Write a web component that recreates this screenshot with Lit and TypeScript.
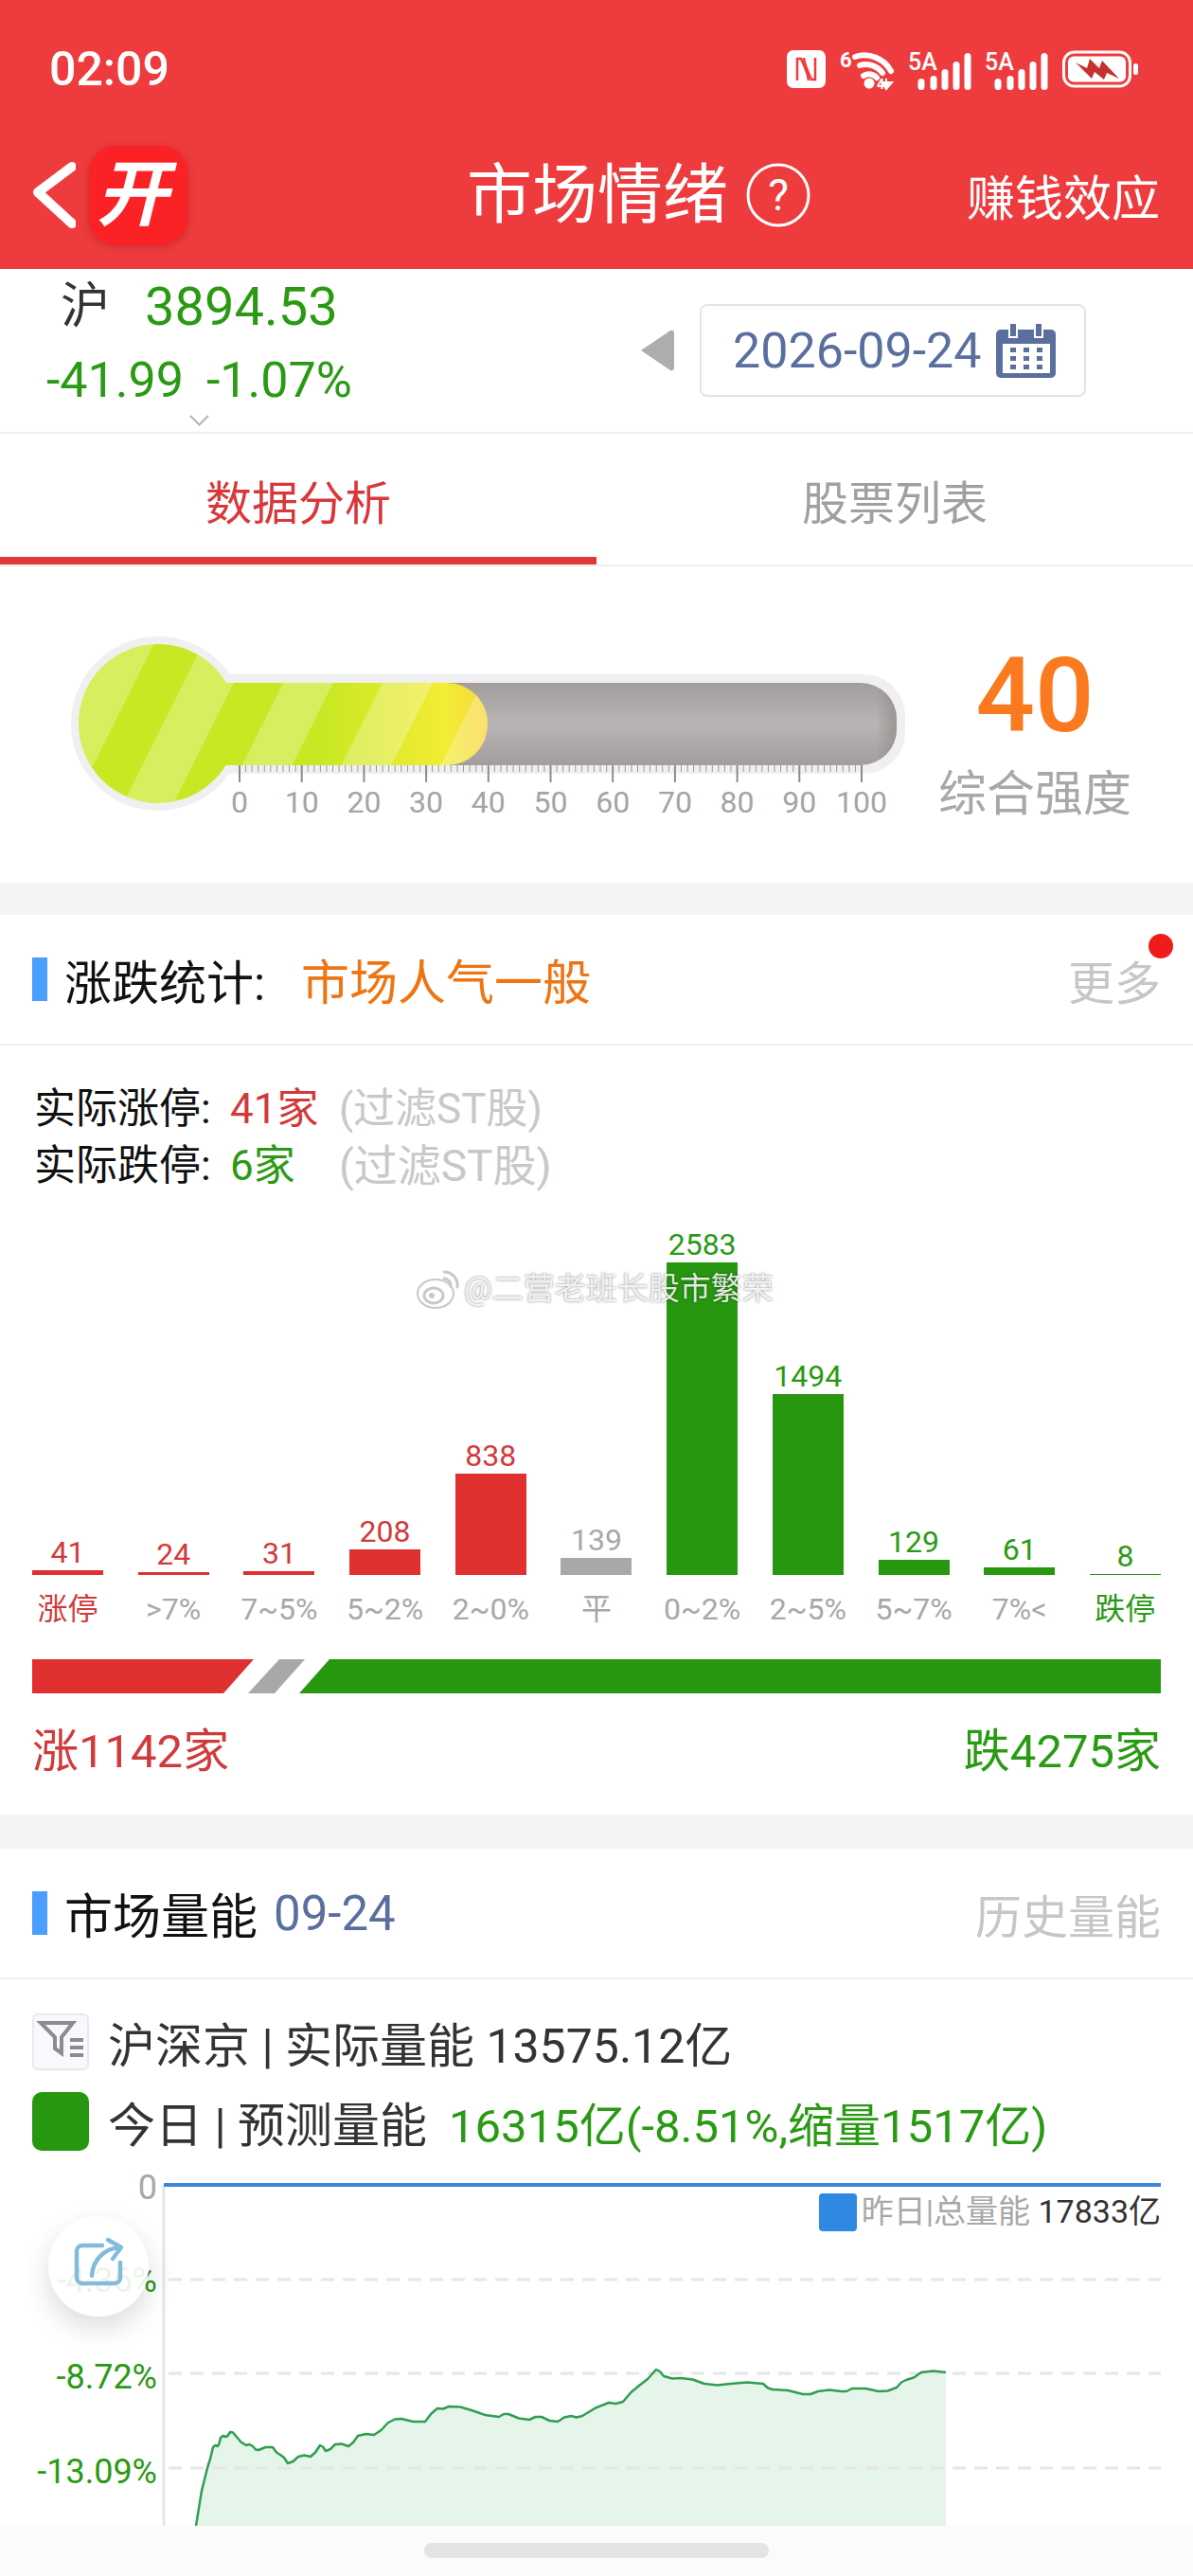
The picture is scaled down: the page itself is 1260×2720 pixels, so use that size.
import { LitElement, css, html, svg } from 'lit';
import { customElement } from 'lit/decorators.js';

const BARS = [
  { v: 41, l: '涨停', c: 'red', lc: 'red' },
  { v: 24, l: '>7%', c: 'red', lc: 'gray' },
  { v: 31, l: '7~5%', c: 'red', lc: 'gray' },
  { v: 208, l: '5~2%', c: 'red', lc: 'gray' },
  { v: 838, l: '2~0%', c: 'red', lc: 'gray' },
  { v: 139, l: '平', c: 'gray', lc: 'gray' },
  { v: 2583, l: '0~2%', c: 'green', lc: 'gray' },
  { v: 1494, l: '2~5%', c: 'green', lc: 'gray' },
  { v: 129, l: '5~7%', c: 'green', lc: 'gray' },
  { v: 61, l: '7%<', c: 'green', lc: 'gray' },
  { v: 8, l: '跌停', c: 'green', lc: 'green' },
];

// traced from the chart, in page pixels
const LINE = [
  [207, 2667], [213, 2630], [219, 2606], [225, 2584], [230, 2583], [233, 2574], [238, 2573], [243, 2568],
  [249, 2572], [260, 2582], [267, 2583], [273, 2587], [288, 2584], [296, 2592], [304, 2601], [315, 2594],
  [328, 2594], [338, 2582], [344, 2588], [354, 2581], [368, 2583], [378, 2572], [395, 2571], [410, 2558],
  [424, 2554], [449, 2557], [462, 2543], [474, 2541], [498, 2545], [527, 2552], [537, 2549], [559, 2555],
  [572, 2552], [589, 2557], [603, 2551], [615, 2551], [643, 2537], [658, 2536], [675, 2519], [693, 2502],
  [701, 2509], [719, 2511], [744, 2517], [772, 2517], [806, 2517], [816, 2523], [848, 2528], [864, 2525],
  [888, 2525], [900, 2522], [928, 2525], [947, 2521], [957, 2513], [973, 2505], [999, 2505],
];

const LIGHT_BANDS = [89, 194, 299, 404, 509];

@customElement('app-root')
export class AppRoot extends LitElement {
  static styles = css`
    :host {
      display: block;
      position: relative;
      width: 1260px;
      height: 2720px;
      overflow: hidden;
      background: #fff;
      color: #222;
      font-family: Roboto, 'Noto Sans CJK SC', sans-serif;
    }
    svg { display: block; flex: none; }

    .top { height: 284px; background: #ee3b3e; color: #fff; }
    .status { height: 146px; display: flex; align-items: center; padding: 0 56px 0 52px; box-sizing: border-box; }
    .time { font-size: 50px; font-weight: 500; flex: 1; }
    .status-icons { display: flex; gap: 15px; align-items: center; }
    .nav { height: 138px; padding: 0 35px 18px 34px; box-sizing: border-box; display: flex; align-items: center; }
    .logo {
      width: 104px; height: 104px; margin-left: 14px; border-radius: 28px;
      background: #fb2226; box-shadow: 0 2px 8px rgba(120, 0, 0, .3);
      display: flex; align-items: center; justify-content: center;
    }
    .logo span { font-size: 76px; font-weight: 700; transform: skewX(-14deg); line-height: 1; }
    .title { margin-left: 295px; font-size: 69px; line-height: 1; }
    .help { margin-left: 19px; }
    .right-link { margin-left: auto; font-size: 51px; }

    .index { height: 174px; border-bottom: 2px solid #eee; box-sizing: border-box; display: flex; align-items: center; }
    .quote { flex: 1; align-self: stretch; display: flex; flex-direction: column; color: #2a9a14; }
    .quote-main { height: 80px; display: flex; align-items: center; padding-left: 64px; font-size: 56px; }
    .quote-main b { font-weight: 400; font-size: 52px; color: #333; width: 89px; margin-top: -12px; }
    .quote-sub { height: 74px; display: flex; align-items: center; gap: 24px; padding-left: 49px; font-size: 52px; }
    .quote-more { padding-left: 200px; }
    .date-box {
      width: 408px; height: 98px; margin: 0 113px 0 27px; box-sizing: border-box;
      border: 2px solid #e4e4e4; border-radius: 8px;
      display: flex; align-items: center; gap: 15px; padding-left: 33px;
      font-size: 52px; color: #5a6f9e;
    }

    .tabs { height: 140px; display: flex; box-sizing: border-box; border-bottom: 2px solid #eee; }
    .tab { flex: 1; display: flex; align-items: center; justify-content: center; font-size: 49px; color: #a0a0a0; }
    .tab.on { color: #d9383a; box-shadow: inset 0 -8px 0 #e0393b; }

    .thermo { height: 334px; display: flex; }
    .score { flex: 1; padding: 83px 44px 0 0; display: flex; flex-direction: column; align-items: center; }
    .score b { font-size: 110px; line-height: 108px; font-weight: 500; color: #fb7a1f; }
    .score span { font-size: 51px; line-height: 60px; margin-top: 20px; color: #a8a8a8; }

    .gap { height: 36px; background: #f4f4f4; }
    .gap.first { height: 34px; }

    .sec-head {
      position: relative; height: 138px; box-sizing: border-box; border-bottom: 2px solid #eee;
      display: flex; align-items: center; padding: 0 34px; font-size: 50px; color: #111;
    }
    .sec-head::before { content: ''; width: 16px; height: 46px; background: #4a9eff; margin-right: 18px; }
    .mood { color: #ee7514; margin-left: 38px; font-size: 51px; }
    .sec-date { color: #5a6f9e; margin-left: 17px; font-size: 51px; }
    .sec-title { font-size: 51px; }
    .sec-link { margin-left: auto; color: #c6c6c6; font-size: 49px; }
    .dot { position: absolute; left: 1213px; top: 20px; width: 26px; height: 26px; border-radius: 50%; background: #f01c1c; }

    .limits { padding: 37px 0 0 36px; font-size: 44px; line-height: 60px; height: 157px; box-sizing: border-box; color: #111; }
    .limit-row { display: flex; align-items: center; }
    .limit-row .key { width: 207px; }
    .limit-row .num { width: 115px; }
    .limit-row .note { color: #c8c8c8; }
    .limit-row .note.wide { font-size: 46px; }
    .red { color: #d13a3a; }
    .green { color: #2a9a14; }
    .gray { color: #a8a8a8; }

    .bars { height: 402px; padding: 0 34px; display: flex; justify-content: space-between; align-items: flex-end; }
    .col { width: 75px; display: flex; flex-direction: column; align-items: center; }
    .col .val { font-size: 32px; line-height: 32px; margin-bottom: 3px; }
    .bar { width: 75px; }
    .bar.red { background: #e03030; }
    .bar.green { background: #26970f; }
    .bar.gray { background: #a8a8a8; }
    .axis { padding: 16px 34px 0; display: flex; justify-content: space-between; font-size: 32px; line-height: 40px; }
    .axis span { width: 75px; display: flex; justify-content: center; white-space: nowrap; }
    .ratio { margin: 33px 0 0 34px; }
    .totals { margin-top: 32px; padding: 0 34px 36px; display: flex; justify-content: space-between; font-size: 49px; line-height: 60px; }

    .energy { padding: 36px 34px 0; font-size: 50px; color: #333; }
    .energy-row { height: 60px; display: flex; align-items: center; gap: 20px; }
    .energy-row + .energy-row { margin-top: 23px; height: 62px; }
    .filter { width: 60px; height: 60px; box-sizing: border-box; border: 2px solid #e8e8ee; border-radius: 6px; background: #f9f9fd; }
    .swatch { width: 60px; height: 62px; border-radius: 10px; background: #26970f; }
    .energy-row .green { margin-left: 3px; font-size: 49px; }

    .chart text { font-size: 36px; }
    .chart .legend { font-size: 34px; }

    .home { position: absolute; left: 0; right: 0; top: 2667px; height: 53px; background: #fbfbfb; display: flex; justify-content: center; align-items: flex-start; }
    .home i { display: block; width: 364px; height: 16px; margin-top: 18px; border-radius: 8px; background: #e4e4e4; }

    .share {
      position: absolute; left: 51px; top: 2340px; width: 106px; height: 106px; border-radius: 50%;
      background: rgba(255, 255, 255, .9); box-shadow: 0 12px 30px rgba(0, 0, 0, .14);
    }
    .mark {
      position: absolute; left: 440px; top: 1336px; display: flex; align-items: center; gap: 4px;
      font-size: 33px; line-height: 50px; color: rgba(255, 255, 255, .88);
      text-shadow: 0 0 3px rgba(0, 0, 0, .4), 0 0 1px rgba(0, 0, 0, .2);
    }
  `;

  private statusIcons() {
    const signal = html`<svg width="66" height="50" viewBox="0 -8 66 50" fill="#fff">
      <text x="-1" y="18" font-size="25" font-weight="500">5A</text>
      ${[[13, 12], [26, 15], [38, 22], [50, 30], [62, 39]].map(([x, h]) =>
        svg`<rect x=${x - 3.5} y=${39 - h} width="7" height=${h} rx="3.5"></rect>`)}
    </svg>`;
    return html`<div class="status-icons">
      <svg width="41" height="40" viewBox="0 0 41 40" fill="none" stroke="#ee3b3e" stroke-width="2.500">
        <rect width="41" height="40" rx="7" fill="#fff" stroke="none"></rect>
        <path d="M11 32V9h4c3 7 7 14 8 23"></path>
        <path d="M30 8v23h-4c-3-7-7-14-8-23"></path>
      </svg>
      <svg width="58" height="56" viewBox="0 -8 58 56" fill="none" stroke="#fff" stroke-width="6">
        <text x="0" y="18" font-size="22" font-weight="700" fill="#fff" stroke="none">6</text>
        <path d="M16 7a32 32 0 0 1 38 15M21 16a22 22 0 0 1 24 8M25 27a11 11 0 0 1 14 2" stroke-linecap="round"></path>
        <circle cx="31" cy="35" r="5.500" fill="#fff" stroke="none"></circle>
        <text x="39" y="41" font-size="14" font-weight="700" fill="#fff" stroke="none">4</text>
        <path d="M49 30v9M49 41l6-7h-10z" stroke-width="2" fill="#fff"></path>
      </svg>
      ${signal}${signal}
      <svg width="82" height="40" viewBox="0 0 82 40">
        <rect x="1.500" y="2" width="70" height="36" rx="11" fill="none" stroke="#fff" stroke-width="3"></rect>
        <rect x="6" y="6.500" width="61" height="27" rx="6" fill="#fff"></rect>
        <path d="M14 13l12 6 3-10 10 10 3-8 18 19-13-6-3 7-10-8-3 7z" fill="#c8302f"></path>
        <rect x="75" y="14" width="5" height="12" rx="2.500" fill="#fff"></rect>
      </svg>
    </div>`;
  }

  private calendar() {
    return html`<svg width="63" height="58" viewBox="0 0 63 58" fill="#5a6f9e">
      <rect y="7" width="63" height="51" rx="5"></rect>
      <rect x="7" y="22" width="50" height="31" fill="#fff"></rect>
      <rect x="14" y="0" width="8" height="15" fill="#5a6f9e" stroke="#fff" stroke-width="2"></rect>
      <rect x="41" y="0" width="8" height="15" fill="#5a6f9e" stroke="#fff" stroke-width="2"></rect>
      ${[15, 29, 43].map(x => [26, 35, 44].map(y => svg`<rect x=${x} y=${y} width="6" height="5"></rect>`))}
    </svg>`;
  }

  private thermometer() {
    const ticks = [];
    for (let i = 0; i <= 100; i++) {
      const x = 253 + i * 6.57;
      const major = i % 10 === 0;
      ticks.push(svg`<line x1=${x} x2=${x} y1="212" y2=${major ? 230 : 219} stroke=${major ? '#8c8c8c' : '#9a9a9a'} stroke-width=${major ? 2 : 1}></line>`);
      if (major) ticks.push(svg`<text x=${x} y="262" text-anchor="middle" font-size="32" fill="#a4a4a4">${i}</text>`);
    }
    // viewBox y is page y minus 596
    return html`<svg width="970" height="334" viewBox="0 2 970 334">
      <defs>
        <linearGradient id="tube" x1="0" y1="0" x2="0" y2="1">
          <stop offset="0" stop-color="#a39d9d"></stop>
          <stop offset=".5" stop-color="#b9b5b4"></stop>
          <stop offset="1" stop-color="#a39d9d"></stop>
        </linearGradient>
        <linearGradient id="tube-end" gradientUnits="userSpaceOnUse" x1="925" y1="0" x2="947" y2="0">
          <stop offset="0" stop-color="#8f8888" stop-opacity="0"></stop>
          <stop offset="1" stop-color="#8f8888" stop-opacity=".7"></stop>
        </linearGradient>
        <linearGradient id="fill" gradientUnits="userSpaceOnUse" x1="340" y1="0" x2="515" y2="0">
          <stop offset="0" stop-color="#c8e823"></stop>
          <stop offset=".75" stop-color="#f3ec35"></stop>
          <stop offset="1" stop-color="#f8d53a"></stop>
        </linearGradient>
        <clipPath id="mercury">
          <circle cx="167" cy="168" r="84"></circle>
          <rect x="167" y="125" width="348" height="87" rx="43"></rect>
          <rect x="167" y="125" width="200" height="87"></rect>
        </clipPath>
      </defs>
      <circle cx="167" cy="168" r="92" fill="#f0f0f0"></circle>
      <rect x="167" y="116" width="789" height="105" rx="44" fill="#f0f0f0"></rect>
      <rect x="167" y="125" width="780" height="87" rx="38" fill="url(#tube)"></rect>
      <rect x="167" y="125" width="780" height="87" rx="38" fill="url(#tube-end)"></rect>
      <g clip-path="url(#mercury)">
        <rect x="70" y="70" width="460" height="200" fill="url(#fill)"></rect>
        ${LIGHT_BANDS.map(a => svg`<polygon fill="#fff" fill-opacity=".27"
          points="${a + 62.5},0 ${a + 115.5},0 ${a - 52.5},336 ${a - 105.5},336"></polygon>`)}
      </g>
      ${ticks}
    </svg>`;
  }

  private chart() {
    // svg starts at page y=2271
    const off = 2271;
    // midpoints nudged up and down so the line is as jagged as the real tick data
    const dense = LINE.flatMap(([x, y], i) => {
      if (i === 0) return [[x, y]];
      const [px, py] = LINE[i - 1];
      const nudge = i < 3 ? 0 : i % 2 ? 1.5 : -1.5;
      return [[(x + px) / 2, (y + py) / 2 + nudge], [x, y]];
    });
    const pts = dense.map(([x, y]) => `${x},${y - off}`).join(' ');
    const grid = [2407, 2506, 2606];
    const labels: [number, string][] = [[2407, '-4.36%'], [2509, '-8.72%'], [2609, '-13.09%']];
    return html`<svg class="chart" width="1260" height="396" viewBox="0 0 1260 396">
      <line x1="173" x2="173" y1="36" y2="396" stroke="#e6e6e6" stroke-width="3"></line>
      <polygon points="207,396 ${pts} 999,396" fill="#e6f5ea"></polygon>
      ${grid.map(y => svg`<line x1="178" x2="1226" y1=${y - off} y2=${y - off} stroke="#e6e6e6" stroke-width="3" stroke-dasharray="14 9"></line>`)}
      <polyline points=${pts} fill="none" stroke="#2f9e4f" stroke-width="2.500" stroke-linejoin="round"></polyline>
      <line x1="173" x2="1226" y1="36" y2="36" stroke="#3a86d8" stroke-width="4"></line>
      <text x="166" y="51" text-anchor="end" fill="#a8a8a8">0</text>
      ${labels.map(([y, t]) => svg`<text x="166" y=${y - off + 13} text-anchor="end" fill="#2a9a14">${t}</text>`)}
      <rect x="865" y="45" width="40" height="40" rx="4" fill="#2f89e3"></rect>
      <text class="legend" x="1226" y="76" text-anchor="end"><tspan fill="#a8a8a8">昨日|总量能</tspan><tspan fill="#333"> 17833亿</tspan></text>
    </svg>`;
  }

  render() {
    const scale = 330 / 2583;
    return html`
      <div class="top">
        <div class="status"><div class="time">02:09</div>${this.statusIcons()}</div>
        <div class="nav">
          <svg width="46" height="72" viewBox="0 0 46 72" fill="none" stroke="#fff" stroke-width="10" stroke-linecap="round" stroke-linejoin="round">
            <path d="M42 6 6 33l36 33"></path>
          </svg>
          <div class="logo"><span>开</span></div>
          <div class="title">市场情绪</div>
          <svg class="help" width="68" height="68" viewBox="0 0 68 68">
            <circle cx="34" cy="34" r="32" fill="none" stroke="#fff" stroke-width="3"></circle>
            <text x="34" y="50" text-anchor="middle" font-size="46" fill="#fff">?</text>
          </svg>
          <div class="right-link">赚钱效应</div>
        </div>
      </div>

      <div class="index">
        <div class="quote">
          <div class="quote-main"><b>沪</b><span>3894.53</span></div>
          <div class="quote-sub"><span>-41.99</span><span>-1.07%</span></div>
          <div class="quote-more">
            <svg width="21" height="12" viewBox="0 0 21 12" fill="none" stroke="#b4b4b4" stroke-width="2"><path d="M1 1l9.500 9.500L20 1"></path></svg>
          </div>
        </div>
        <svg width="35" height="44" viewBox="0 0 35 44"><path d="M0 22 31 1q4-1 4 3v36q0 4-4 3z" fill="#adadad"></path></svg>
        <div class="date-box"><span>2026-09-24</span>${this.calendar()}</div>
      </div>

      <div class="tabs">
        <div class="tab on">数据分析</div>
        <div class="tab">股票列表</div>
      </div>

      <div class="thermo">
        ${this.thermometer()}
        <div class="score"><b>40</b><span>综合强度</span></div>
      </div>
      <div class="gap first"></div>

      <div class="sec-head">
        <span>涨跌统计:</span><span class="mood">市场人气一般</span>
        <span class="sec-link">更多</span>
        <i class="dot"></i>
      </div>
      <div class="limits">
        <div class="limit-row"><span class="key">实际涨停:</span><span class="num red">41家</span><span class="note">(过滤ST股)</span></div>
        <div class="limit-row"><span class="key">实际跌停:</span><span class="num green">6家</span><span class="note wide">(过滤ST股)</span></div>
      </div>

      <div class="bars">
        ${BARS.map(b => html`<div class="col">
          <span class="val ${b.c}">${b.v}</span>
          <div class="bar ${b.c}" style="height:${Math.max(1, b.v * scale)}px"></div>
        </div>`)}
      </div>
      <div class="axis">${BARS.map(b => html`<span class=${b.lc}>${b.l}</span>`)}</div>
      <svg class="ratio" width="1192" height="36" viewBox="0 0 1192 36">
        <polygon points="0,0 234,0 202,36 0,36" fill="#e03030"></polygon>
        <polygon points="261,0 288,0 256,36 228,36" fill="#a8a8a8"></polygon>
        <polygon points="314,0 1192,0 1192,36 282,36" fill="#26970f"></polygon>
      </svg>
      <div class="totals"><span class="red">涨1142家</span><span class="green">跌4275家</span></div>
      <div class="gap"></div>

      <div class="sec-head">
        <span class="sec-title">市场量能</span><span class="sec-date">09-24</span>
        <span class="sec-link">历史量能</span>
      </div>
      <div class="energy">
        <div class="energy-row">
          <div class="filter">
            <svg width="56" height="56" viewBox="0 0 56 56" fill="none" stroke="#8c8c8c" stroke-width="4">
              <path d="M7 8h34L29 23v17l-7-5V23z"></path>
              <path d="M38 26h14M38 34h14M38 42h14"></path>
            </svg>
          </div>
          <span>沪深京 | 实际量能 13575.12亿</span>
        </div>
        <div class="energy-row">
          <div class="swatch"></div>
          <span>今日 | 预测量能</span>
          <span class="green">16315亿(-8.51%,缩量1517亿)</span>
        </div>
      </div>
      ${this.chart()}

      <div class="home"><i></i></div>
      <div class="share">
        <svg width="106" height="106" viewBox="0 0 106 106" fill="none" stroke="#84bbdc" stroke-width="4.500" stroke-linecap="round" stroke-linejoin="round">
          <path d="M57 31H36a6 6 0 0 0-6 6v28a6 6 0 0 0 6 6h34a6 6 0 0 0 6-6V49"></path>
          <path d="M46 63c1-16 12-29 30-30M63 25l14 8-9 12"></path>
        </svg>
      </div>
      <div class="mark">
        <svg width="46" height="46" viewBox="0 0 46 46">
          <ellipse cx="20" cy="28" rx="19" ry="15" fill="#fff" stroke="#c8c8c8" stroke-width="2"></ellipse>
          <ellipse cx="18" cy="30" rx="10" ry="8" fill="none" stroke="#c8c8c8" stroke-width="3"></ellipse>
          <circle cx="16" cy="30" r="3" fill="#c8c8c8"></circle>
          <path d="M29 5a14 14 0 0 1 14 16M29 12a7 7 0 0 1 7 8" fill="none" stroke="#c8c8c8" stroke-width="3" stroke-linecap="round"></path>
        </svg>
        <span>@二营老班长股市繁荣</span>
      </div>
    `;
  }
}
